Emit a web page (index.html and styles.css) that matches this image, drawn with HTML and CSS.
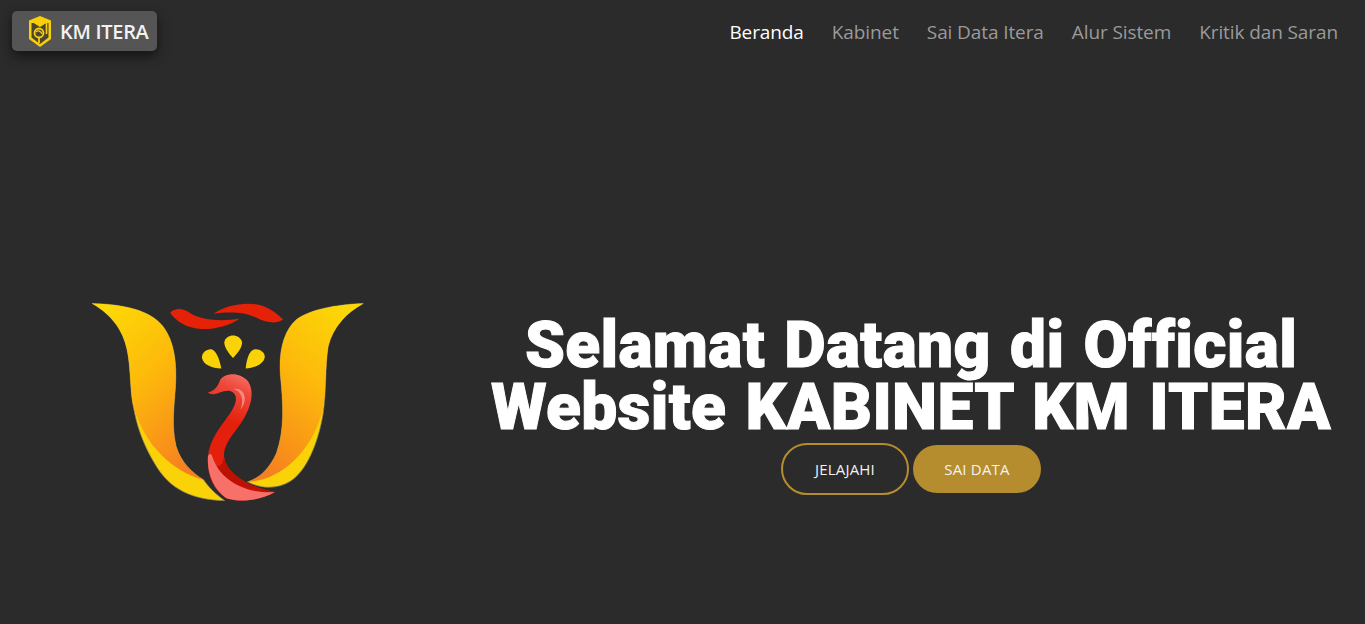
FILE: index.html
```html
<!DOCTYPE html>
<html lang="en">
<head>
    <meta charset="UTF-8">
    <meta name="viewport" content="width=device-width, initial-scale=1.0">
    <title>KM ITERA</title>
    <link rel="stylesheet" href="styles.css">
</head>
<body>

<nav class="navbar">
    <a class="brand" href="#">
        <svg class="brand-icon" viewBox="0 0 22 31">
            <path d="M11 0 L22 4.5 V23 L11 31 L0 23 V4.5 Z" fill="#f9cf0a"/>
            <path d="M2.5 7 H19.5 V21.5 L11 28 L2.5 21.5 Z" fill="#4a4632"/>
            <path d="M1.5 5 L11 1.5 L20.5 5 L11 11 Z" fill="#f9cf0a"/>
            <circle cx="10" cy="17" r="4.5" fill="none" stroke="#f9cf0a" stroke-width="1.8"/>
            <path d="M7 16 C9 14 12 15 13 18" fill="none" stroke="#f9cf0a" stroke-width="1.2"/>
            <path d="M10 21 V27" stroke="#f9cf0a" stroke-width="1.8"/>
            <path d="M17.5 7 V18" stroke="#f9cf0a" stroke-width="1.6"/>
        </svg>
        <span>KM ITERA</span>
    </a>
    <ul class="nav-links">
        <li><a class="active" href="#">Beranda</a></li>
        <li><a href="#">Kabinet</a></li>
        <li><a href="#">Sai Data Itera</a></li>
        <li><a href="#">Alur Sistem</a></li>
        <li><a href="#">Kritik dan Saran</a></li>
    </ul>
</nav>

<section class="hero">
    <div class="hero-logo">
        <svg class="logo" viewBox="38 40 814 594">
            <defs>
                <linearGradient id="petalL" x1="0.2" y1="0" x2="0.75" y2="1">
                    <stop offset="0" stop-color="#fcd807"/>
                    <stop offset="0.45" stop-color="#fdb80b"/>
                    <stop offset="1" stop-color="#f67f20"/>
                </linearGradient>
                <linearGradient id="petalR" x1="0.8" y1="0" x2="0.25" y2="1">
                    <stop offset="0" stop-color="#fcd807"/>
                    <stop offset="0.45" stop-color="#fdb80b"/>
                    <stop offset="1" stop-color="#f67f20"/>
                </linearGradient>
                <linearGradient id="swan" gradientUnits="userSpaceOnUse" x1="500" y1="255" x2="440" y2="390">
                    <stop offset="0" stop-color="#f7716a"/>
                    <stop offset="0.35" stop-color="#ee4a3c"/>
                    <stop offset="1" stop-color="#e4200c"/>
                </linearGradient>
            </defs>
            <!-- left petal -->
            <path d="M38 42 C130 45 210 60 250 110 C285 155 292 220 288 290 C284 350 275 410 290 470 C305 520 340 550 372 570 C385 590 410 615 435 632 C340 630 270 600 225 520 C190 460 165 400 155 300 C150 230 150 170 120 120 C100 85 70 60 38 42 Z" fill="#fad208" stroke="#8a8468" stroke-width="2"/>
            <path d="M38 42 C130 45 210 60 250 110 C285 155 292 220 288 290 C284 350 275 410 290 470 C305 520 340 550 372 570 C280 545 200 470 165 360 C158 340 156 320 155 300 C150 230 150 170 120 120 C100 85 70 60 38 42 Z" fill="url(#petalL)"/>
            <!-- right petal -->
            <path d="M850 42 C770 45 690 60 650 90 C610 125 596 190 602 260 C610 340 615 420 590 490 C570 535 540 565 503 576 C540 595 590 600 630 575 C680 545 715 460 730 370 C740 300 735 230 745 170 C760 110 800 70 850 42 Z" fill="#fad208" stroke="#8a8468" stroke-width="2"/>
            <path d="M850 42 C770 45 690 60 650 90 C610 125 596 190 602 260 C610 340 615 420 590 490 C570 535 540 565 503 576 C590 575 690 500 728 365 C740 300 735 230 745 170 C760 110 800 70 850 42 Z" fill="url(#petalR)"/>
            <!-- top swooshes -->
            <path d="M272 70 C285 55 310 55 330 70 C370 95 430 95 480 88 C440 115 380 125 340 115 C310 108 285 90 272 70 Z" fill="#e52207"/>
            <path d="M402 73 C440 45 510 35 550 50 C575 60 595 75 610 90 C590 105 560 100 530 85 C490 65 440 68 402 73 Z" fill="#e52207"/>
            <!-- drops -->
            <path d="M460 205 C445 190 433 170 434 158 C436 145 448 138 460 138 C472 138 485 146 487 158 C488 172 475 190 460 205 Z" fill="#fad208"/>
            <path d="M425 237 C395 235 372 225 367 205 C366 190 380 178 395 179 C410 182 420 210 425 237 Z" fill="#fad208"/>
            <path d="M498 237 C528 235 552 222 555 203 C556 188 540 177 525 179 C508 183 500 210 498 237 Z" fill="#fad208"/>
            <!-- swan -->
            <path d="M385 308 C405 305 415 290 422 270 C435 250 480 245 505 275 C525 305 515 350 490 390 C470 425 430 460 433 500 C440 550 500 590 585 607 C540 630 480 640 440 625 C400 600 380 550 385 500 C390 450 420 415 445 380 C470 345 480 315 452 304 C430 298 400 325 385 308 Z" fill="url(#swan)"/>
            <path d="M462 298 C485 305 495 330 482 360 C495 345 500 325 490 308 C482 298 472 296 462 298 Z" fill="#f7877f"/>
            <path d="M433 500 C440 550 500 590 585 607 C530 610 440 590 405 520 C415 540 430 525 433 500 Z" fill="#bd1203"/>
            <path d="M385 500 C382 555 405 600 440 625 C490 640 540 630 585 607 C500 612 420 575 396 495 C392 490 387 492 385 500 Z" fill="#f7716a"/>
        </svg>
    </div>
    <div class="hero-text">
        <h1>Selamat Datang di Official Website KABINET KM ITERA</h1>
        <div class="hero-buttons">
            <a class="btn btn-outline" href="#">JELAJAHI</a>
            <a class="btn btn-solid" href="#">SAI DATA</a>
        </div>
    </div>
</section>

</body>
</html>
```

FILE: styles.css
```css
body {
    font-family: "Open Sans", "Noto Sans", sans-serif;
    background-color: #2b2b2b;
    color: white;
    margin: 0;
}
a {
    text-decoration: none;
}
.navbar {
    display: flex;
    justify-content: space-between;
    align-items: center;
    padding: 11px 27px 11px 12px;
}
.brand {
    display: flex;
    align-items: center;
    gap: 9px;
    width: 145px;
    height: 40px;
    box-sizing: border-box;
    padding-left: 17px;
    background: #555;
    border-radius: 5px;
    box-shadow: 0 5px 12px rgba(0, 0, 0, 0.55);
    color: #f2f2f2;
    font-size: 20px;
    font-weight: 600;
    letter-spacing: -0.3px;
}
.brand-icon {
    width: 22px;
    height: 31px;
}
.nav-links {
    display: flex;
    gap: 28px;
    list-style: none;
    margin: 0;
    padding: 2px 0 0;
    font-size: 19px;
    letter-spacing: -0.1px;
}
.nav-links a {
    color: #9a9a9a;
}
.nav-links a.active {
    color: white;
}
.hero {
    display: grid;
    grid-template-columns: 455px 1fr;
    align-items: center;
    padding-top: 243px;
}
.hero-logo {
    display: flex;
    justify-content: center;
}
.logo {
    width: 272px;
    height: 200px;
    margin-top: -3px;
}
.hero-text {
    padding-left: 2px;
    text-align: center;
}
h1 {
    margin: 2px auto 0;
    width: 860px;
    font-family: Roboto, "Noto Sans", sans-serif;
    font-size: 64px;
    font-weight: 900;
    line-height: 62px;
    letter-spacing: 0.35px;
    word-spacing: 3px;
    -webkit-text-stroke: 1px white;
}
.hero-buttons {
    display: flex;
    justify-content: center;
    align-items: center;
    gap: 4px;
    margin-top: 4px;
}
.btn {
    display: flex;
    justify-content: center;
    align-items: center;
    box-sizing: border-box;
    width: 128px;
    border-radius: 26px;
    color: #f2f2f2;
    font-size: 15px;
    letter-spacing: 0.2px;
}
.btn-outline {
    height: 52px;
    border: 2px solid #b58d2f;
}
.btn-solid {
    height: 48px;
    background: #b58d2f;
}
```
